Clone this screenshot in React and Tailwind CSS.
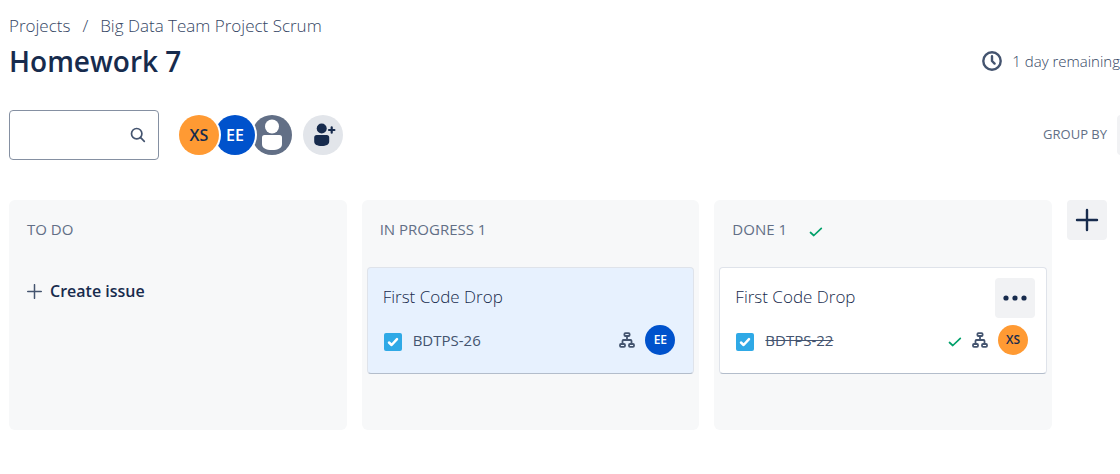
import React from "react";

function CheckIcon({ className }) {
  return (
    <svg className={className} viewBox="0 0 14 10" fill="none" stroke="#00a06a" strokeWidth="1.7" strokeLinecap="round" strokeLinejoin="round" aria-hidden="true">
      <path d="M1.5 5.5 4.8 8.5 12.3 1.4" />
    </svg>
  );
}

function SubtaskIcon() {
  return (
    <svg className="size-4 shrink-0" viewBox="0 0 16 16" fill="none" stroke="#44546f" strokeWidth="1.8" aria-hidden="true">
      <rect x="5.4" y="1.2" width="5.2" height="2.8" rx="1" />
      <rect x="1" y="12" width="5" height="2.8" rx="1" />
      <rect x="10" y="12" width="5" height="2.8" rx="1" />
      <path d="M8 4V8M3.5 11.8V8.9q0-.9.9-.9h7.2q.9 0 .9.9v2.9" />
    </svg>
  );
}

function TaskIcon() {
  return (
    <svg className="mt-1 size-[18px] shrink-0" viewBox="0 0 18 18" role="img" aria-label="Task">
      <rect width="18" height="18" rx="2" fill="#2fa9e6" />
      <path d="M5 9.5 7.6 12 13 6.2" fill="none" stroke="#fff" strokeWidth="2.5" strokeLinecap="round" strokeLinejoin="round" />
    </svg>
  );
}

function SmallAvatar({ initials, className }) {
  return (
    <span className={`flex size-[30px] shrink-0 items-center justify-center rounded-full text-xs font-semibold ${className}`}>
      {initials}
    </span>
  );
}

function Column({ title, done, children }) {
  return (
    <section className="min-w-0 flex-1 rounded-md bg-[#f7f8f9] px-[5px] pb-14">
      <h2 className="flex h-[67px] items-center gap-[22px] px-[13px] pb-2 text-[15px] font-medium text-[#626f86]">
        {title}
        {done && <CheckIcon className="mt-1 h-[10px] w-[14px]" />}
      </h2>
      {children}
    </section>
  );
}

function Card({ title, issue, resolved, className, children, menu }) {
  return (
    <article className={`relative h-[107px] rounded border border-[#dfe3ea] border-b-[#b3bdcb] px-[15px] pt-[18px] ${className}`}>
      <h3 className="text-[17px] font-light leading-[22px] text-[#172b4d]">{title}</h3>
      <div className="mt-[17px] flex h-[30px] items-center pl-px">
        <TaskIcon />
        <a href="#issue" className={`ml-[11px] text-[15px] font-medium text-[#44546f] ${resolved ? "line-through" : ""}`}>
          {issue}
        </a>
        <div className="ml-auto mr-[3px] flex items-center gap-[10px]">{children}</div>
      </div>
      {menu && (
        <button aria-label="Card actions" className="absolute right-[11px] top-[10px] flex size-10 items-center justify-center rounded bg-[#f1f2f4]">
          <svg className="h-[6px] w-6" viewBox="0 0 24 6" fill="#172b4d" aria-hidden="true">
            <circle cx="3" cy="3" r="2.6" />
            <circle cx="12" cy="3" r="2.6" />
            <circle cx="21" cy="3" r="2.6" />
          </svg>
        </button>
      )}
    </article>
  );
}

export default function App() {
  return (
    <main className="overflow-hidden bg-white pb-11 pl-[9px] font-['Open_Sans','Noto_Sans',sans-serif] text-[#172b4d]">
      <nav aria-label="Breadcrumb" className="flex gap-3 pt-[14px] text-[17px] font-light leading-6 text-[#344563]">
        <a href="#projects">Projects</a>
        <span>/</span>
        <a href="#board">Big Data Team Project Scrum</a>
      </nav>
      <header className="flex h-[46px] items-center justify-between">
        <h1 className="text-[28px] font-semibold leading-9">Homework 7</h1>
        <div className="flex items-center gap-[10px] whitespace-nowrap text-[15px] font-light text-[#344563]">
          <svg className="size-5" viewBox="0 0 20 20" fill="none" stroke="#44546f" strokeWidth="2.4" strokeLinecap="round" strokeLinejoin="round" aria-hidden="true">
            <circle cx="10" cy="10" r="8.7" />
            <path d="M10 5.3V10l2.6 2.6" />
          </svg>
          1 day remaining
        </div>
      </header>

      <div className="mt-[26px] flex items-center">
        <div className="relative">
          <input type="search" aria-label="Search board" className="block h-[50px] w-[150px] rounded border border-[#8590a2] bg-white pl-3 pr-9" />
          <svg className="absolute right-[13px] top-[17px] size-4" viewBox="0 0 16 16" fill="none" stroke="#44546f" strokeWidth="1.7" strokeLinecap="round" aria-hidden="true">
            <circle cx="6.7" cy="6.7" r="5.2" />
            <path d="m10.7 10.7 3.6 3.6" />
          </svg>
        </div>
        <div className="ml-5 flex items-center text-base font-semibold">
          <button className="z-20 flex size-10 items-center justify-center rounded-full bg-[#ff9a33] ring-2 ring-white">XS</button>
          <button className="z-10 -ml-1 flex size-10 items-center justify-center rounded-full bg-[#0052cc] text-white ring-2 ring-white">EE</button>
          <button aria-label="Unassigned" className="-ml-[3px] size-10 rounded-full bg-[#626f86]">
            <svg viewBox="0 0 40 40" fill="#fff" aria-hidden="true">
              <circle cx="20" cy="11.5" r="7" />
              <path d="M10 22.5q0-2.5 2.5-2.5h15q2.5 0 2.5 2.5V29c0 4-4 6-10 6s-10-2-10-6z" />
            </svg>
          </button>
          <button aria-label="Add people" className="ml-[11px] size-10 rounded-full bg-[#e2e5ea]">
            <svg viewBox="0 0 40 40" fill="#172b4d" aria-hidden="true">
              <circle cx="18.7" cy="13.5" r="5" />
              <path d="M11.2 22.5q0-2.5 2.5-2.5h10q2.5 0 2.5 2.5v4c0 3-3 4.500-7.500 4.500s-7.500-1.500-7.500-4.500z" />
              <path d="M28.700 12.300v5.400M26 15h5.400" stroke="#172b4d" strokeWidth="2.200" strokeLinecap="round" />
            </svg>
          </button>
        </div>
        <div className="-mr-9 ml-auto flex items-center gap-[10px] text-[13px] text-[#626f86]">
          <span id="group-label">GROUP BY</span>
          <button aria-labelledby="group-label" className="h-10 w-[39px] rounded bg-[#f1f2f4]" />
        </div>
      </div>

      <div className="mt-10 flex items-stretch gap-[15px] pr-[13px]">
        <Column title="TO DO">
          <button className="mt-3 flex items-center gap-2 px-[13px] text-base font-semibold leading-6">
            <svg className="size-[15px]" viewBox="0 0 15 15" stroke="#44546f" strokeWidth="1.5" strokeLinecap="round" aria-hidden="true">
              <path d="M7.5.7v13.600M.7 7.500h13.600" />
            </svg>
            Create issue
          </button>
        </Column>
        <Column title="IN PROGRESS 1">
          <Card title="First Code Drop" issue="BDTPS-26" className="bg-[#e7f1fe]">
            <SubtaskIcon />
            <SmallAvatar initials="EE" className="bg-[#0052cc] text-white" />
          </Card>
        </Column>
        <Column title="DONE 1" done>
          <Card title="First Code Drop" issue="BDTPS-22" resolved menu className="bg-white">
            <CheckIcon className="mt-1 h-[10px] w-[14px]" />
            <SubtaskIcon />
            <SmallAvatar initials="XS" className="bg-[#ff9a33]" />
          </Card>
        </Column>
        <button aria-label="Add column" className="flex size-10 shrink-0 items-center justify-center rounded bg-[#f1f2f4]">
          <svg className="size-6" viewBox="0 0 24 24" stroke="#172b4d" strokeWidth="2.4" strokeLinecap="round" aria-hidden="true">
            <path d="M12 2v20M2 12h20" />
          </svg>
        </button>
      </div>
    </main>
  );
}
